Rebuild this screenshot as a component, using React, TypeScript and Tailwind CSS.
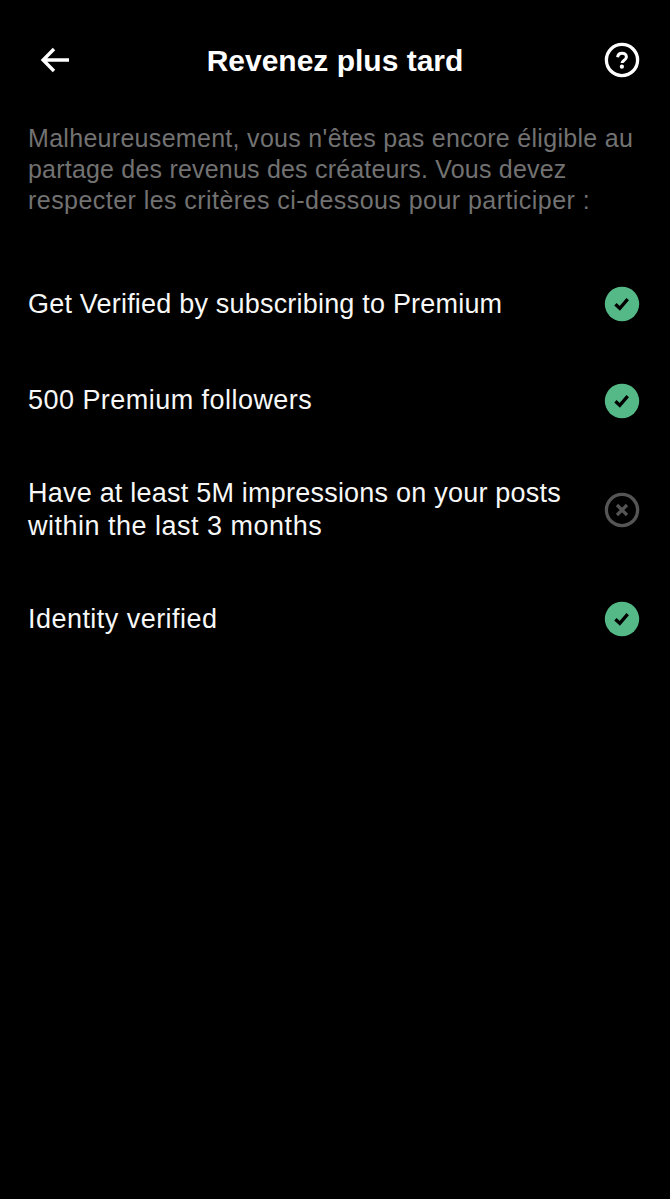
interface Criterion {
  lines: { text: string; className: string }[];
  met: boolean;
  className: string;
}

const criteria: Criterion[] = [
  {
    lines: [{ text: 'Get Verified by subscribing to Premium', className: 'tracking-[0.2px]' }],
    met: true,
    className: 'h-24'
  },
  {
    lines: [{ text: '500 Premium followers', className: 'tracking-[0.46px]' }],
    met: true,
    className: 'h-[97px]'
  },
  {
    lines: [
      { text: 'Have at least 5M impressions on your posts', className: 'tracking-[0.22px]' },
      { text: 'within the last 3 months', className: 'tracking-[0.5px]' }
    ],
    met: false,
    className: 'h-[122px]'
  },
  {
    lines: [{ text: 'Identity verified', className: 'tracking-[0.46px]' }],
    met: true,
    className: 'h-24'
  }
];

function BackIcon() {
  return (
    <svg width="30" height="28" viewBox="0 0 30 28" fill="none" stroke="currentColor" strokeWidth="3.4">
      <path d="M14 3 3.100 14l10.900 11M3.200 14h25.800" />
    </svg>
  );
}

function HelpIcon() {
  return (
    <svg width="36" height="36" viewBox="0 0 36 36" fill="none" stroke="currentColor">
      <circle cx="18" cy="18" r="15.6" strokeWidth="3.3" />
      <path d="M13.6 15.2c.3-2.500 2-4 4.500-4 2.500 0 4.300 1.500 4.300 3.700 0 3.300-4.300 3.200-4.300 6.200" strokeWidth="3" />
      <circle cx="17.900" cy="24.700" r="2.100" fill="currentColor" stroke="none" />
    </svg>
  );
}

function StatusIcon({ met }: { met: boolean }) {
  return met ? (
    <svg className="shrink-0" width="36" height="36" viewBox="0 0 36 36" fill="none">
      <circle cx="18" cy="18" r="17.2" fill="#54b987" />
      <path d="m11.400 18.200 4.400 4.100 7.900-9.200" stroke="#000" strokeWidth="3.300" />
    </svg>
  ) : (
    <svg className="shrink-0" width="36" height="36" viewBox="0 0 36 36" fill="none" stroke="#555">
      <circle cx="18" cy="18" r="15.6" strokeWidth="3.3" />
      <path d="m13 13 10 10m0-10-10 10" strokeWidth="3.200" />
    </svg>
  );
}

export default function App() {
  return (
    <main className="min-h-[1199px] bg-black font-['Liberation_Sans',sans-serif] text-[#f7f7f7]">
      <header className="flex h-[120px] items-center justify-between pr-[30px] pl-10 text-white">
        <button aria-label="Retour" className="w-[26px]"><BackIcon /></button>
        <h1 className="text-[30px] font-bold whitespace-nowrap">Revenez plus tard</h1>
        <button aria-label="Aide"><HelpIcon /></button>
      </header>
      <p className="pt-[3px] pl-7 text-[25px] leading-[31px] whitespace-nowrap text-[#727272]">
        <span className="block tracking-[0.3px]">Malheureusement, vous n'êtes pas encore éligible au</span>
        <span className="block tracking-[0.2px]">partage des revenus des créateurs. Vous devez</span>
        <span className="block tracking-[0.45px]">respecter les critères ci-dessous pour participer :</span>
      </p>
      <ul className="mt-10 pr-[30px] pl-7 text-[27px] leading-[33px]">
        {criteria.map((c) => (
          <li key={c.lines[0].text} className={`flex items-center justify-between ${c.className}`}>
            <div className="whitespace-nowrap">
              {c.lines.map((line) => (
                <span key={line.text} className={`block ${line.className}`}>{line.text}</span>
              ))}
            </div>
            <StatusIcon met={c.met} />
          </li>
        ))}
      </ul>
    </main>
  );
}
